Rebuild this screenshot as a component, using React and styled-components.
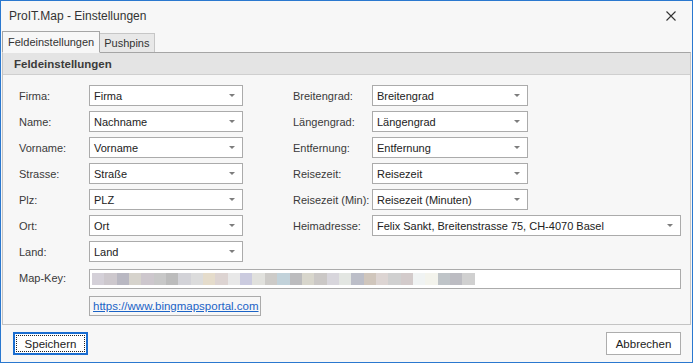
import React from 'react'
import styled, { createGlobalStyle } from 'styled-components'

const GlobalStyle = createGlobalStyle`
  body {
    margin: 0;
    background: #f7f7f7;
    font-family: "Liberation Sans", Arial, sans-serif;
  }
`

const Window = styled.div`
  width: 693px;
  height: 363px;
  box-sizing: border-box;
  border: 1px solid #2a78cf;
  background: #f7f7f7;
  display: flex;
  flex-direction: column;
  font-size: 11px;
  color: #3a3a3a;
`

const TitleBar = styled.div`
  height: 29px;
  display: flex;
  align-items: center;
  justify-content: space-between;
  padding: 0 16px 0 8px;
  font-size: 12px;
  color: #333;
`

const CloseIcon = styled.svg`
  width: 10px;
  height: 10px;
`

const TabStrip = styled.div`
  display: flex;
  align-items: flex-end;
  height: 22px;
  padding-left: 1px;
  position: relative;
  z-index: 1;
`

const Tab = styled.div`
  box-sizing: border-box;
  height: ${p => (p.active ? '22px' : '19px')};
  padding: 0 ${p => (p.active ? '5px' : '4px')};
  display: flex;
  align-items: center;
  font-size: 11px;
  color: #333;
  background: ${p => (p.active ? '#f7f7f7' : '#e8e8e8')};
  border: 1px solid ${p => (p.active ? '#a5a5a5' : '#c6c6c6')};
  border-bottom: ${p => (p.active ? '1px solid #f7f7f7' : 'none')};
  border-left: ${p => (p.active ? undefined : 'none')};
  margin-bottom: ${p => (p.active ? '-1px' : '0')};
`

const Panel = styled.div`
  margin: 0 1px;
  border: 1px solid #a5a5a5;
  border-bottom-color: #c4c4c4;
  border-right-color: #c4c4c4;
  border-left-color: #c4c4c4;
  flex: 0 0 auto;
  height: 273px;
  box-sizing: border-box;
`

const PanelHeader = styled.div`
  height: 21px;
  background: #e4e4e4;
  border-bottom: 1px solid #cfcfcf;
  display: flex;
  align-items: center;
  padding-left: 11px;
  font-size: 11.5px;
  font-weight: bold;
  color: #3b3b3b;
`

const Form = styled.div`
  display: grid;
  grid-template-columns: 70px 154px 50px 79px 156px 1fr;
  grid-auto-rows: 21px;
  row-gap: 5px;
  padding: 10px 9px 0 16px;
  align-items: center;
`

const Label = styled.div`
  grid-column: ${p => (p.right ? '4' : '1')};
  color: #3a3a3a;
`

const ComboBox = styled.div`
  grid-column: ${p => p.span || (p.right ? '5' : '2')};
  box-sizing: border-box;
  height: 21px;
  background: #fff;
  border: 1px solid #ababab;
  display: flex;
  align-items: center;
  justify-content: space-between;
  padding: 0 7px 0 4px;
  color: #222;
`

const Arrow = styled.span`
  width: 0;
  height: 0;
  border-left: 3px solid transparent;
  border-right: 3px solid transparent;
  border-top: 3px solid #7d7d7d;
`

const KeyInput = styled.div`
  grid-column: 2 / 7;
  box-sizing: border-box;
  height: 20px;
  margin-top: 2px;
  background: #fff;
  border: 1px solid #ababab;
  display: flex;
  align-items: center;
  padding-left: 2px;
`

const Pixel = styled.span`
  width: 12.35px;
  height: 12px;
  flex: 0 0 auto;
`

const LinkBox = styled.div`
  grid-column: 2 / 4;
  width: 172px;
  box-sizing: border-box;
  height: 20px;
  margin-top: 5px;
  border: 1px solid #ababab;
  display: flex;
  align-items: center;
  padding-left: 3px;
`

const Link = styled.a`
  color: #1b63c6;
  text-decoration: underline;
  font-size: 11.5px;
`

const Footer = styled.div`
  flex: 1;
  display: flex;
  justify-content: space-between;
  align-items: flex-start;
  padding: 7px 11px 0 12px;
`

const Button = styled.div`
  box-sizing: border-box;
  width: 75px;
  height: 23px;
  background: #fff;
  border: ${p => (p.focused ? '2px solid #1a6dd0' : '1px solid #adadad')};
  display: flex;
  align-items: center;
  justify-content: center;
  font-size: 11.5px;
  color: #222;
  position: relative;
  &::after {
    content: '';
    display: ${p => (p.focused ? 'block' : 'none')};
    position: absolute;
    inset: 1px;
    border: 1px dotted #222;
  }
`

const keyColors = [
  '#d4d0d8', '#cdc8cd', '#b9b8c2', '#d6d3cc', '#cdc7cd', '#c8c8c8', '#bcbcbc',
  '#d3d3d8', '#dcdcdc', '#e5dccb', '#ddd4d2', '#e8e8e8', '#cbcbdf', '#e1e1dd',
  '#cdcbc8', '#c2d2da', '#bcbcbe', '#d8d6cc', '#cbc8c6', '#d8d6dc', '#e3e6e2',
  '#bcbec8', '#d0c6bc', '#ddd5d3', '#d0d0d0', '#d3cbcb', '#f0f3f3', '#f3f3ec',
  '#bfc4c8', '#bcbcc2', '#d0d0d0',
]

const left = [
  ['Firma:', 'Firma'],
  ['Name:', 'Nachname'],
  ['Vorname:', 'Vorname'],
  ['Strasse:', 'Straße'],
  ['Plz:', 'PLZ'],
  ['Ort:', 'Ort'],
  ['Land:', 'Land'],
]

const right = [
  ['Breitengrad:', 'Breitengrad'],
  ['Längengrad:', 'Längengrad'],
  ['Entfernung:', 'Entfernung'],
  ['Reisezeit:', 'Reisezeit'],
  ['Reisezeit (Min):', 'Reisezeit (Minuten)'],
  ['Heimadresse:', 'Felix Sankt, Breitenstrasse 75, CH-4070 Basel'],
]

export default function App() {
  const rows = left.map((l, i) => {
    const r = right[i]
    return (
      <React.Fragment key={l[0]}>
        <Label>{l[0]}</Label>
        <ComboBox>{l[1]}<Arrow /></ComboBox>
        {r && <Label right>{r[0]}</Label>}
        {r && (
          <ComboBox right span={i === 5 ? '5 / 7' : undefined}>
            {r[1]}<Arrow />
          </ComboBox>
        )}
      </React.Fragment>
    )
  })

  return (
    <>
      <GlobalStyle />
      <Window>
        <TitleBar>
          <span>ProIT.Map - Einstellungen</span>
          <CloseIcon viewBox="0 0 10 10">
            <path d="M0.5 0.5 L9.5 9.5 M9.5 0.5 L0.5 9.5" stroke="#333" strokeWidth="1.1" />
          </CloseIcon>
        </TitleBar>
        <TabStrip>
          <Tab active>Feldeinstellungen</Tab>
          <Tab>Pushpins</Tab>
        </TabStrip>
        <Panel>
          <PanelHeader>Feldeinstellungen</PanelHeader>
          <Form>
            {rows}
            <Label>Map-Key:</Label>
            <KeyInput>
              {keyColors.map((c, i) => (
                <Pixel key={i} style={{ background: c }} />
              ))}
            </KeyInput>
            <LinkBox>
              <Link>https://www.bingmapsportal.com</Link>
            </LinkBox>
          </Form>
        </Panel>
        <Footer>
          <Button focused>Speichern</Button>
          <Button>Abbrechen</Button>
        </Footer>
      </Window>
    </>
  )
}
